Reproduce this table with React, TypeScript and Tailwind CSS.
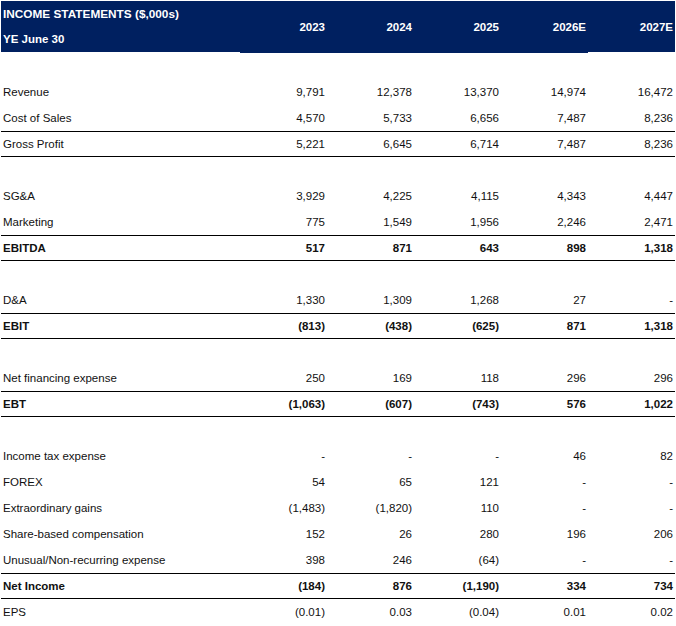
import React from 'react'

type Row = {
  label?: string
  values?: string[]
  bold?: boolean
  ruled?: boolean
}

const rows: Row[] = [
  {},
  { label: 'Revenue', values: ['9,791', '12,378', '13,370', '14,974', '16,472'] },
  { label: 'Cost of Sales', values: ['4,570', '5,733', '6,656', '7,487', '8,236'] },
  { label: 'Gross Profit', values: ['5,221', '6,645', '6,714', '7,487', '8,236'], ruled: true },
  {},
  { label: 'SG&A', values: ['3,929', '4,225', '4,115', '4,343', '4,447'] },
  { label: 'Marketing', values: ['775', '1,549', '1,956', '2,246', '2,471'] },
  { label: 'EBITDA', values: ['517', '871', '643', '898', '1,318'], bold: true, ruled: true },
  {},
  { label: 'D&A', values: ['1,330', '1,309', '1,268', '27', '-'] },
  { label: 'EBIT', values: ['(813)', '(438)', '(625)', '871', '1,318'], bold: true, ruled: true },
  {},
  { label: 'Net financing expense', values: ['250', '169', '118', '296', '296'] },
  { label: 'EBT', values: ['(1,063)', '(607)', '(743)', '576', '1,022'], bold: true, ruled: true },
  {},
  { label: 'Income tax expense', values: ['-', '-', '-', '46', '82'] },
  { label: 'FOREX', values: ['54', '65', '121', '-', '-'] },
  { label: 'Extraordinary gains', values: ['(1,483)', '(1,820)', '110', '-', '-'] },
  { label: 'Share-based compensation', values: ['152', '26', '280', '196', '206'] },
  { label: 'Unusual/Non-recurring expense', values: ['398', '246', '(64)', '-', '-'] },
  { label: 'Net Income', values: ['(184)', '876', '(1,190)', '334', '734'], bold: true, ruled: true },
  { label: 'EPS', values: ['(0.01)', '0.03', '(0.04)', '0.01', '0.02'] },
]

const years = ['2023', '2024', '2025', '2026E', '2027E']

const App: React.FC = () => {
  return (
    <div className="h-[626px] w-[676px] bg-white px-px pt-px font-['Liberation_Sans',Arial,sans-serif] text-[11.5px] text-[#111]">
      {/* header band */}
      <div className="flex items-start">
        <div className="flex h-[51px] w-[239px] flex-col bg-[#002060] pt-px font-bold text-white">
          <div className="flex h-[26px] items-center pl-[2px] text-[11.8px]">INCOME STATEMENTS ($,000s)</div>
          <div className="flex h-[24px] items-center pl-[2px]">YE June 30</div>
        </div>
        {years.map((y, i) => (
          <div
            key={y}
            className={`flex w-[87px] items-center justify-end bg-[#002060] pr-[2px] pt-[2px] font-bold text-white ${
              i < 4 ? 'h-[52px]' : 'h-[51px]'
            }`}
          >
            {y}
          </div>
        ))}
      </div>

      {rows.map((row, idx) => (
        <div
          key={idx}
          className={`flex h-[26px] items-center pt-px ${row.ruled ? 'border-y border-black' : ''} ${
            row.bold ? 'font-bold' : ''
          }`}
        >
          <div className="w-[239px] pl-[2px]">{row.label}</div>
          {(row.values ?? []).map((v, i) => (
            <div key={i} className="w-[87px] pr-[2px] text-right">
              {v}
            </div>
          ))}
        </div>
      ))}
    </div>
  )
}

export default App
